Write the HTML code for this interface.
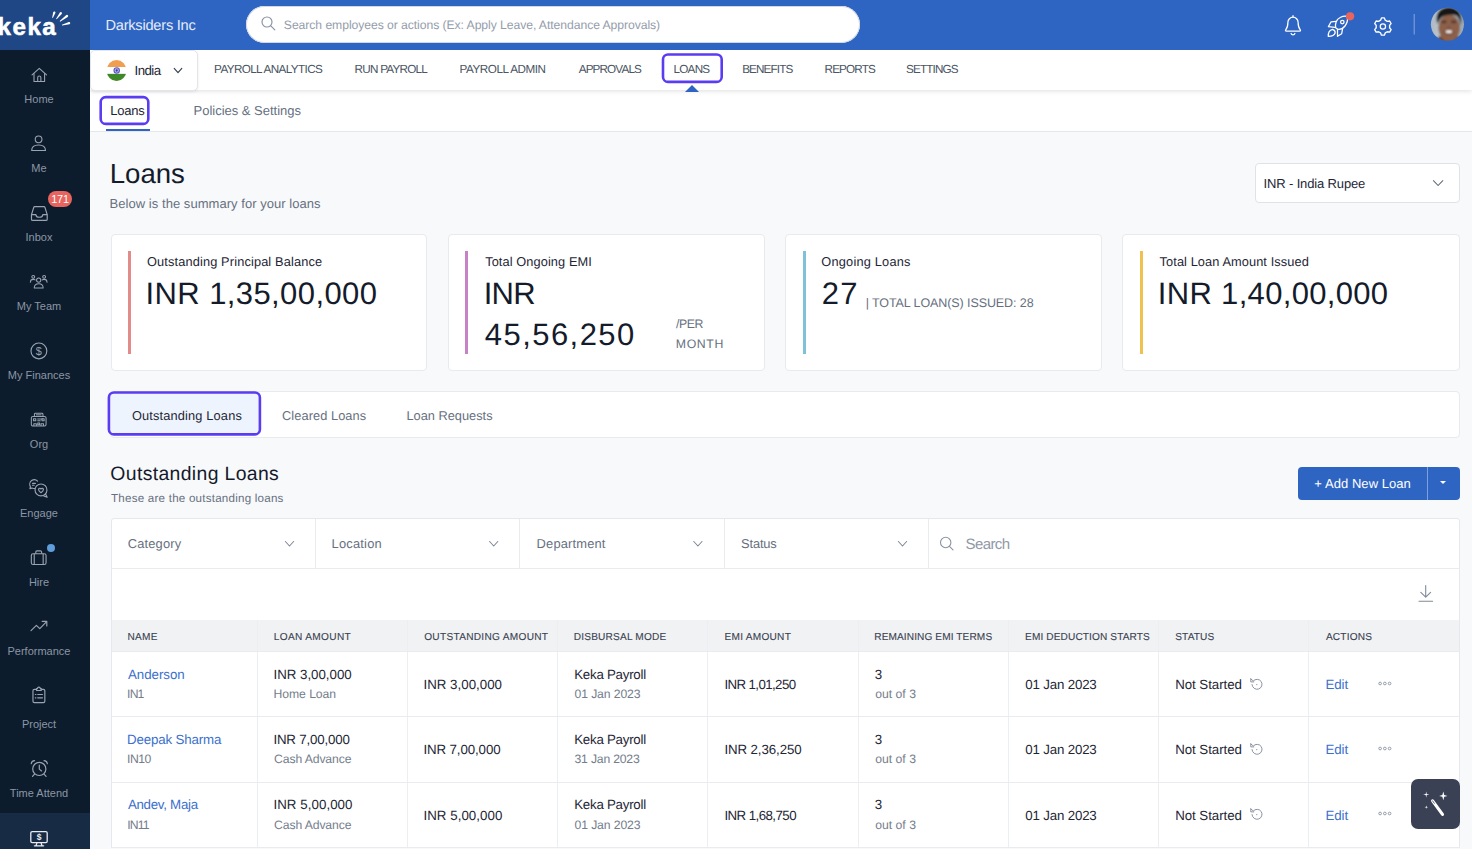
<!DOCTYPE html>
<html lang="en">
<head>
<meta charset="utf-8">
<title>Keka - Loans</title>
<style>
*{box-sizing:border-box;margin:0;padding:0}
html,body{width:1472px;height:861px;overflow:hidden;background:#fff;font-family:"Liberation Sans",sans-serif;color:#1e2635}
#app{position:absolute;left:0;top:0;width:1472px;height:849px;background:#f8f9fb;overflow:hidden}
.abs{position:absolute;white-space:nowrap;line-height:1}
.b{position:absolute}
#txl{position:absolute;left:0;top:0;width:0;height:0;z-index:10}
.tx{position:absolute;white-space:nowrap;line-height:1;text-rendering:geometricPrecision}
#logo{position:absolute;left:0;top:0;width:90px;height:50px;background:#204785;z-index:4}
#topbar{position:absolute;left:90px;top:0;width:1382px;height:50px;background:#2e65c3;z-index:4}
#side{position:absolute;left:0;top:50px;width:90px;height:799px;background:#0d1c2c;z-index:4}
#side .sel{position:absolute;left:0;top:763px;width:90px;height:36px;background:#172b44}
.sl{position:absolute;left:0;width:78px;text-align:center;font-size:11px;color:#8b96a5;line-height:1;white-space:nowrap}
.si{position:absolute}
.si svg{width:100%;height:100%;display:block;overflow:visible}
#nav2{position:absolute;left:90px;top:50px;width:1382px;height:40px;background:#fff;box-shadow:0 1px 5px rgba(0,0,0,.13);z-index:3}
#country{position:absolute;left:0;top:0;width:108px;height:41px;background:#fff;border:1px solid #e2e5ea;border-radius:5px;box-shadow:0 1px 3px rgba(0,0,0,.08)}
#nav3{position:absolute;left:90px;top:90px;width:1382px;height:42px;background:#fff;border-bottom:1px solid #e4e7eb;z-index:2}
.card{position:absolute;top:234px;height:137px;background:#fff;border:1px solid #e8eaee;border-radius:4px}
.bar{position:absolute;top:251px;width:3px;height:102.5px}
.ln{position:absolute;background:#e9ebee}
</style>
</head>
<body>
<div id="app">
<!-- LOGO -->
<div id="logo">
  <div class="abs" style="left:-2.4px;top:15.3px;font-size:24.2px;font-weight:bold;color:#fff;letter-spacing:1.45px;-webkit-text-stroke:.55px #fff">keka</div>
  <svg class="abs" style="left:50px;top:9px" width="22" height="20" viewBox="0 0 22 20" fill="#fff" stroke="none"><path d="M2.83 8.91 L5.39 3.98 A1.15 1.15 0 0 0 3.21 3.22 L2.17 8.69 Z M6.68 10.21 L11.72 4.90 A1.15 1.15 0 0 0 9.88 3.50 L6.12 9.79 Z M10.11 12.68 L17.70 7.92 A1.15 1.15 0 0 0 16.30 6.08 L9.69 12.12 Z M12.10 16.54 L19.52 15.20 A1.15 1.15 0 0 0 18.88 13.00 L11.90 15.86 Z"/></svg>
</div>

<!-- TOP BAR -->
<div id="topbar">
  <div style="position:absolute;left:156px;top:6px;width:614px;height:37px;background:#fff;border-radius:19px;box-shadow:inset 0 0 0 1px #d3d8e0"></div>
  <svg class="abs" style="left:171px;top:16px" width="15" height="15" viewBox="0 0 15 15" fill="none" stroke="#8892a1" stroke-width="1.150" stroke-linecap="round"><circle cx="6" cy="6" r="5"/><path d="M9.800 9.800 L13.800 13.800"/></svg>
<!--TOPICONS-->
</div>
<!-- SIDEBAR -->
<div id="side">
  <div class="sel"></div>
  <!-- Home -->
  <div class="si" style="left:29.7px;top:15.5px;width:18.6px;height:18.6px"><svg viewBox="0 0 20 20" fill="none" stroke="#9aa4b1" stroke-width="1.15" stroke-linejoin="round" stroke-linecap="round"><path d="M2.2 9.6 L10 2.6 L17.8 9.6"/><path d="M4.3 8 V16.6 H15.7 V8"/><path d="M8.3 16.6 V12.4 a1.7 1.7 0 0 1 3.4 0 V16.6"/></svg></div>
  <div class="sl" style="top:44px">Home</div>
  <!-- Me -->
  <div class="si" style="left:29.4px;top:84.3px;width:19.2px;height:19.2px"><svg viewBox="0 0 20 20" fill="none" stroke="#9aa4b1" stroke-width="1.15" stroke-linejoin="round"><circle cx="10" cy="5.6" r="3.5"/><path d="M2.8 17.2 c0-4 3-5.8 7.2-5.8 s7.2 1.8 7.2 5.8 z"/></svg></div>
  <div class="sl" style="top:113px">Me</div>
  <!-- Inbox -->
  <div class="si" style="left:28.6px;top:152.5px;width:20.7px;height:20.7px"><svg viewBox="0 0 20 20" fill="none" stroke="#9aa4b1" stroke-width="1.15" stroke-linejoin="round"><path d="M2.4 11.2 L4.6 4.2 a1 1 0 0 1 1 -.7 H14.4 a1 1 0 0 1 1 .7 L17.6 11.2 V15.6 a1.2 1.2 0 0 1 -1.2 1.2 H3.6 a1.2 1.2 0 0 1 -1.2 -1.2 Z"/><path d="M2.4 11.2 H6.6 c.2 1.6 1.4 2.6 3.4 2.6 s3.2 -1 3.4 -2.6 H17.6"/></svg></div>
  <div class="sl" style="top:182px">Inbox</div>
  <div class="abs" style="left:48px;top:141px;width:24px;height:16px;border-radius:8px;background:#e8645f;color:#fff;font-size:11px;line-height:16px;text-align:center;letter-spacing:-.3px">171</div>
  <!-- My Team -->
  <div class="si" style="left:29.3px;top:221.7px;width:19.4px;height:19.4px"><svg viewBox="0 0 20 20" fill="none" stroke="#9aa4b1" stroke-width="1.05" stroke-linejoin="round" stroke-linecap="round"><circle cx="10" cy="8.3" r="2.2"/><circle cx="4.4" cy="5" r="1.5"/><circle cx="15.6" cy="5" r="1.5"/><path d="M5.4 16.4 c0-3 1.9-4.3 4.6-4.3 s4.6 1.3 4.6 4.3 z"/><path d="M1.4 10.6 c0-2 1.2-3 3-3 c.8 0 1.4 .2 1.9 .6"/><path d="M18.6 10.6 c0-2 -1.2-3 -3-3 c-.8 0 -1.4 .2 -1.9 .6"/></svg></div>
  <div class="sl" style="top:251px">My Team</div>
  <!-- My Finances -->
  <div class="si" style="left:29.1px;top:290.8px;width:19.8px;height:19.8px"><svg viewBox="0 0 20 20" fill="none" stroke="#9aa4b1" stroke-width="1.15"><circle cx="10" cy="10" r="8"/><text x="10" y="14" text-anchor="middle" font-family="Liberation Sans, sans-serif" font-size="11" fill="#9aa4b1" stroke="none">$</text></svg></div>
  <div class="sl" style="top:320px">My Finances</div>
  <!-- Org -->
  <div class="si" style="left:29.3px;top:359.8px;width:19.4px;height:19.4px"><svg viewBox="0 0 20 20" fill="none" stroke="#9aa4b1" stroke-width="1.05" stroke-linejoin="round"><rect x="2.4" y="6.6" width="15.2" height="10" rx="1.6"/><path d="M5.6 6.6 V4.4 a1 1 0 0 1 1 -1 H13.4 a1 1 0 0 1 1 1 V6.6"/><path d="M7.2 5 H12.8"/><rect x="4.6" y="9" width="2.4" height="2.2"/><path d="M8.6 9.4 H14 M8.6 11 H12"/><rect x="13.4" y="9" width="2.2" height="2.2"/><path d="M5 16.6 V14.2 H7.6 V16.6 M12.4 16.6 V14.2 H15 V16.6"/><rect x="9" y="13.4" width="2" height="1.8"/></svg></div>
  <div class="sl" style="top:389px">Org</div>
  <!-- Engage -->
  <div class="si" style="left:28.4px;top:427.8px;width:21.3px;height:21.3px"><svg viewBox="0 0 20 20" fill="none" stroke="#9aa4b1" stroke-width="1.05" stroke-linejoin="round" stroke-linecap="round"><path d="M6.2 9.8 c-.9 .2 -1.8 .1 -2.6 -.3 L1.8 10 l.5 -1.8 C1.2 6.400 1.400 3.800 3.400 2.400 c1.800 -1.200 4.200 -.9 5.600 .6"/><path d="M4.200 5 H7 M4.200 6.800 H5.800"/><circle cx="12.200" cy="11.200" r="5.600"/><path d="M16.400 14.900 L18 18 l-3.200 -1.200"/><path d="M12.200 13.800 c-1.400 -1 -2.300 -1.900 -2.300 -2.900 a1.200 1.200 0 0 1 2.300 -.5 a1.200 1.200 0 0 1 2.300 .5 c0 1 -.9 1.900 -2.300 2.900 z"/></svg></div>
  <div class="sl" style="top:458px">Engage</div>
  <!-- Hire -->
  <div class="si" style="left:29.3px;top:497.6px;width:19.4px;height:19.4px"><svg viewBox="0 0 20 20" fill="none" stroke="#9aa4b1" stroke-width="1.15" stroke-linejoin="round"><rect x="2.400" y="6" width="15.200" height="11" rx="1.800"/><path d="M7 6 V4.200 a1.200 1.200 0 0 1 1.200 -1.200 h3.600 a1.200 1.200 0 0 1 1.200 1.200 V6"/><path d="M5.400 6 V17 M14.600 6 V17"/></svg></div>
  <div class="sl" style="top:527px">Hire</div>
  <div class="abs" style="left:47px;top:494px;width:8px;height:8px;border-radius:4px;background:#5f9ddb"></div>
  <!-- Performance -->
  <div class="si" style="left:29.0px;top:566.2px;width:20px;height:20px"><svg viewBox="0 0 20 20" fill="none" stroke="#9aa4b1" stroke-width="1.15" stroke-linejoin="round" stroke-linecap="round"><path d="M2 14.600 L7.400 9.400 L10.800 12.600 L17.600 5.600"/><path d="M13.200 5.400 H17.800 V10"/></svg></div>
  <div class="sl" style="top:596px">Performance</div>
  <!-- Project -->
  <div class="si" style="left:29.1px;top:635.2px;width:19.8px;height:19.8px"><svg viewBox="0 0 20 20" fill="none" stroke="#9aa4b1" stroke-width="1.15" stroke-linejoin="round" stroke-linecap="round"><path d="M7.600 4.400 H5.400 a1.400 1.400 0 0 0 -1.400 1.400 V16.400 a1.400 1.400 0 0 0 1.400 1.400 H14.600 a1.400 1.400 0 0 0 1.400 -1.400 V5.800 a1.400 1.400 0 0 0 -1.400 -1.400 H12.400"/><path d="M7.600 5.600 V3.600 h1 a1.400 1.400 0 0 1 2.800 0 h1 V5.600 Z"/><path d="M6.400 9.600 h.6 M8.800 9.600 H13.600 M6.400 13 h.6 M8.800 13 H13.600"/></svg></div>
  <div class="sl" style="top:669px">Project</div>
  <!-- Time Attend -->
  <div class="si" style="left:28.7px;top:708.1px;width:20.6px;height:20.6px"><svg viewBox="0 0 20 20" fill="none" stroke="#9aa4b1" stroke-width="1.15" stroke-linejoin="round" stroke-linecap="round"><circle cx="10" cy="10.600" r="6.400"/><path d="M10 7 V10.800 L12.200 12.600"/><path d="M2.200 5.600 c.2 -1.800 1.600 -3 3.200 -3 M17.800 5.600 c-.2 -1.800 -1.600 -3 -3.200 -3"/><path d="M5.400 15.600 L3.400 17.800 M14.600 15.600 L16.600 17.800"/></svg></div>
  <div class="sl" style="top:738px">Time Attend</div>
  <!-- Payroll (selected) -->
  <div class="si" style="left:29.0px;top:777.5px;width:20px;height:20px"><svg viewBox="0 0 20 20" fill="none" stroke="#e8ecf1" stroke-width="1.300" stroke-linejoin="round" stroke-linecap="round"><rect x="1.800" y="3.600" width="16.400" height="11" rx="1.400"/><path d="M8 14.600 L7 17.800 M12 14.600 L13 17.800 M5.400 17.800 H14.600"/><text x="10" y="12.200" text-anchor="middle" font-family="Liberation Sans, sans-serif" font-weight="bold" font-size="8.500" fill="#e8ecf1" stroke="none">$</text></svg></div>
</div>

<!-- TOP ICONS -->
<svg class="b" style="left:1272px;top:0;z-index:6" width="200" height="50" viewBox="1272 0 200 50" fill="none" stroke="#fff" stroke-width="1.25" stroke-linecap="round" stroke-linejoin="round">
  <path d="M1293 15.700 V16.900"/>
  <path d="M1287.900 22.300 A5.100 5.100 0 0 1 1298.100 22.300 C1298.100 26 1298.900 28.300 1300.300 29.900 C1300.800 30.500 1300.400 31.200 1299.700 31.200 H1286.300 C1285.600 31.200 1285.200 30.500 1285.700 29.900 C1287.100 28.300 1287.900 26 1287.900 22.300 Z"/>
  <path d="M1291.100 33.500 A2 2 0 0 0 1294.900 33.500"/>
  <path d="M1347.200 16.400 C1343 15.600 1337.600 17.500 1336.100 22 C1335.400 24 1335.300 26 1335.700 27.800 L1337.600 29.200 C1340 29.600 1343 28.600 1345 26 C1347.500 22.800 1347.800 19 1347.200 16.400 Z"/>
  <path d="M1335.900 21.400 L1331.100 21.800 L1328.400 26.600 L1334.900 27.300"/>
  <path d="M1342.600 28.700 L1341.700 33.700 L1337.500 36.300 L1337.500 29.500"/>
  <path d="M1328.300 36.400 C1328.100 33 1329.600 30.100 1332.600 29.400 C1334.400 30.100 1335.400 31.500 1335.100 33 C1334.500 35.100 1331.800 36.300 1328.300 36.400 Z"/>
  <circle cx="1342.300" cy="22.100" r="1.750"/>
  <path d="M1380.57 20.16 L1381.46 17.92 L1384.34 17.92 L1385.23 20.16 L1387.27 21.34 L1389.65 20.98 L1391.10 23.49 L1389.60 25.37 L1389.60 27.73 L1391.10 29.61 L1389.65 32.12 L1387.27 31.76 L1385.23 32.94 L1384.34 35.18 L1381.46 35.18 L1380.57 32.94 L1378.53 31.76 L1376.15 32.12 L1374.70 29.61 L1376.20 27.73 L1376.20 25.37 L1374.70 23.49 L1376.15 20.98 L1378.53 21.34 Z" stroke-width="1.35"/>
  <circle cx="1382.900" cy="26.550" r="2.650"/>
  <circle cx="1350.100" cy="16.300" r="4.100" fill="#e8655f" stroke="none"/>
  <path d="M1414.200 14 V34.600" stroke="#7f9fdb" stroke-width="1.100" stroke-linecap="butt"/>
  <defs><filter id="bl" x="-10%" y="-10%" width="120%" height="120%"><feGaussianBlur stdDeviation=".8"/></filter><clipPath id="av"><circle cx="1447.400" cy="24.300" r="16.550"/></clipPath>
  <linearGradient id="avbg" x1="0" y1="0" x2="1" y2="0"><stop offset="0" stop-color="#a3afb9"/><stop offset=".3" stop-color="#bcc6cd"/><stop offset="1" stop-color="#98a4ae"/></linearGradient></defs>
  <g clip-path="url(#av)" stroke="none"><g filter="url(#bl)">
    <rect x="1426" y="3" width="43" height="43" fill="url(#avbg)"/>
    <rect x="1441" y="33" width="17" height="11" fill="#85573f"/><ellipse cx="1449.200" cy="27.800" rx="10.800" ry="13.200" fill="#8d614a"/>
    <path d="M1437.200 24 C1434.500 12 1441 7.200 1448.500 7.300 C1457 7.400 1463.500 12.500 1460.800 25.500 C1460.300 21 1459 17.800 1457 15.900 C1452.500 13.800 1446.500 14.600 1442 17 C1440 19 1438.600 21.500 1437.200 24 Z" fill="#121317"/>
    <ellipse cx="1443.900" cy="21.900" rx="2.900" ry="1.300" fill="#47302a" opacity=".85"/><ellipse cx="1453.700" cy="21.900" rx="2.900" ry="1.300" fill="#47302a" opacity=".85"/>
    <ellipse cx="1448.800" cy="27.200" rx="2.200" ry="1.200" fill="#7a4f3d" opacity=".7"/>
    <ellipse cx="1448.900" cy="32.100" rx="5" ry="2.500" fill="#6a4034"/>
    <ellipse cx="1448.900" cy="31.700" rx="3.400" ry="1.350" fill="#f7f3ef"/>
    <path d="M1436 42 L1438.500 36.500 C1440.500 35.500 1442 37 1443 39.500 L1444 43 Z" fill="#6b4435"/>
    <path d="M1462 42 L1459.500 36.800 C1457.800 36 1456.600 37.400 1455.800 39.600 L1455 43 Z" fill="#7a4c3a"/>
  </g></g>
</svg>
<!-- NAV 2 -->
<div id="nav2">
  <div id="country"></div>
  <svg class="b" style="left:14px;top:8px" width="26" height="26" viewBox="104 58 26 26"><defs><clipPath id="fl"><ellipse cx="116.550" cy="70.450" rx="9.850" ry="10.550"/></clipPath></defs><g clip-path="url(#fl)"><rect x="104" y="58" width="26" height="9.050" fill="#ef9f4f"/><rect x="104" y="67.050" width="26" height="6.800" fill="#fff"/><rect x="104" y="73.850" width="26" height="10" fill="#3f8828"/></g><circle cx="116.700" cy="70.500" r="2.700" fill="#b9b9e6" stroke="#5a5ac2" stroke-width="1.100"/><circle cx="116.700" cy="70.500" r="1.150" fill="#3b3bb0"/></svg>
  <div class="b" style="left:595px;top:35px;width:0;height:0;border-left:7px solid transparent;border-right:7px solid transparent;border-bottom:7px solid #2e65c3"></div>
</div>
<svg class="b" style="left:172px;top:66px;z-index:8" width="12" height="9" viewBox="172 66 12 9" fill="none" stroke="#374151" stroke-width="1.15" stroke-linecap="round" stroke-linejoin="round"><path d="M174.20 68.40 L178.00 72.70 L181.80 68.40"/></svg><svg class="b" style="left:659px;top:51px;z-index:9" width="66" height="35" viewBox="659 51 66 35"><rect x="663.00" y="54.50" width="58.70" height="27.40" rx="5" fill="none" stroke="#5a3df2" stroke-width="2.6"/></svg><!-- NAV 3 -->
<div id="nav3">
  <div class="b" style="left:15.5px;top:39px;width:44.5px;height:2px;background:#2e65c3"></div>
</div>
<svg class="b" style="left:97px;top:93px;z-index:9" width="55" height="35" viewBox="97 93 55 35"><rect x="100.70" y="97.10" width="47.60" height="26.80" rx="5" fill="none" stroke="#5a3df2" stroke-width="2.6"/></svg><!-- MAIN -->
<div class="b" style="left:1255px;top:163px;width:205px;height:40px;background:#fff;border:1px solid #dfe3e8;border-radius:4px"></div>
<svg class="b" style="left:1431px;top:178px;z-index:8" width="14" height="10" viewBox="1431 178 14 10" fill="none" stroke="#5c6675" stroke-width="1.05" stroke-linecap="round" stroke-linejoin="round"><path d="M1433.40 180.70 L1438.10 185.50 L1442.80 180.70"/></svg><div class="card" style="left:111px;width:316px"></div><div class="bar" style="left:128.3px;background:#e28b8b"></div>
<div class="card" style="left:448px;width:317px"></div><div class="bar" style="left:465px;background:#c781c6"></div>
<div class="card" style="left:785px;width:317px"></div><div class="bar" style="left:802.5px;background:#7fc1d9"></div>
<div class="card" style="left:1122px;width:338px"></div><div class="bar" style="left:1139.8px;background:#f0c14f"></div>
<div class="b" style="left:110px;top:391px;width:1350px;height:47px;background:#fff;border:1px solid #e8eaee;border-radius:4px"></div>
<svg class="b" style="left:105px;top:389px;z-index:9" width="159" height="49" viewBox="105 389 159 49"><rect x="108.90" y="392.50" width="151.00" height="41.90" rx="5" fill="#eef4fd" stroke="#5a3df2" stroke-width="2.6"/></svg><div class="b" style="left:1298px;top:467px;width:129px;height:33px;background:#2e65c3;border-radius:4px 0 0 4px"></div><div class="b" style="left:1427px;top:467px;width:1px;height:33px;background:#7ea0dc"></div><div class="b" style="left:1428px;top:467px;width:32px;height:33px;background:#2e65c3;border-radius:0 4px 4px 0"></div><div class="b" style="left:1440.300px;top:481px;width:0;height:0;border-left:3.4px solid transparent;border-right:3.4px solid transparent;border-top:3.8px solid #fff"></div>
<div class="b" style="left:111px;top:518px;width:1349px;height:330px;background:#fff;border:1px solid #e6e8ec;border-radius:3px 3px 0 0"></div>
<div class="ln" style="left:111px;top:568px;width:1349px;height:1px"></div>
<div class="ln" style="left:315px;top:519px;width:1px;height:49px"></div><div class="ln" style="left:519px;top:519px;width:1px;height:49px"></div><div class="ln" style="left:724px;top:519px;width:1px;height:49px"></div><div class="ln" style="left:928px;top:519px;width:1px;height:49px"></div>
<svg class="b" style="left:283px;top:539px;z-index:8" width="13" height="9" viewBox="283 539 13 9" fill="none" stroke="#7c8694" stroke-width="1.05" stroke-linecap="round" stroke-linejoin="round"><path d="M285.40 541.50 L289.50 546.00 L293.60 541.50"/></svg><svg class="b" style="left:487px;top:539px;z-index:8" width="13" height="9" viewBox="487 539 13 9" fill="none" stroke="#7c8694" stroke-width="1.05" stroke-linecap="round" stroke-linejoin="round"><path d="M489.60 541.50 L493.70 546.00 L497.80 541.50"/></svg><svg class="b" style="left:691px;top:539px;z-index:8" width="13" height="9" viewBox="691 539 13 9" fill="none" stroke="#7c8694" stroke-width="1.05" stroke-linecap="round" stroke-linejoin="round"><path d="M693.80 541.50 L697.90 546.00 L702.00 541.50"/></svg><svg class="b" style="left:896px;top:539px;z-index:8" width="13" height="9" viewBox="896 539 13 9" fill="none" stroke="#7c8694" stroke-width="1.05" stroke-linecap="round" stroke-linejoin="round"><path d="M898.40 541.50 L902.50 546.00 L906.60 541.50"/></svg>
<svg class="b" style="left:939px;top:536px" width="16" height="16" viewBox="0 0 16 16" fill="none" stroke="#8a93a2" stroke-width="1.100" stroke-linecap="round"><circle cx="6.700" cy="6.500" r="5.200"/><path d="M10.500 10.400 L14 13.800"/></svg>
<svg class="b" style="left:1417px;top:584px" width="18" height="19" viewBox="0 0 18 19" fill="none" stroke="#808a98" stroke-width="1.100" stroke-linecap="round" stroke-linejoin="round"><path d="M8.700 1.500 V13 M3.800 8.300 L8.700 13.200 L13.600 8.300 M2 17.300 H15.600"/></svg>
<div class="b" style="left:112px;top:620px;width:1347px;height:31px;background:#f1f2f4"></div>
<div class="ln" style="left:257px;top:620px;width:1px;height:228px;background:#eceef1"></div><div class="ln" style="left:407px;top:620px;width:1px;height:228px;background:#eceef1"></div><div class="ln" style="left:557px;top:620px;width:1px;height:228px;background:#eceef1"></div><div class="ln" style="left:707px;top:620px;width:1px;height:228px;background:#eceef1"></div><div class="ln" style="left:858px;top:620px;width:1px;height:228px;background:#eceef1"></div><div class="ln" style="left:1008px;top:620px;width:1px;height:228px;background:#eceef1"></div><div class="ln" style="left:1158px;top:620px;width:1px;height:228px;background:#eceef1"></div><div class="ln" style="left:1308px;top:620px;width:1px;height:228px;background:#eceef1"></div>
<div class="ln" style="left:111px;top:651px;width:1349px;height:1px;background:#e9ebee"></div><div class="ln" style="left:111px;top:716px;width:1349px;height:1px;background:#e9ebee"></div><div class="ln" style="left:111px;top:782px;width:1349px;height:1px;background:#e9ebee"></div><div class="ln" style="left:111px;top:847px;width:1349px;height:1px;background:#e9ebee"></div>
<svg class="b" style="left:1249.500px;top:677.5px" width="13" height="13" viewBox="0 0 13 13" fill="none" stroke="#7d8796" stroke-width=".9" stroke-linecap="round" stroke-linejoin="round"><path d="M3.300 2.900 A5 5 0 1 1 2 6.600"/><path d="M.8 .9 V3.900 H3.800 M.8 .9 L2.600 2.400"/><circle cx="6.800" cy="6.600" r=".6" fill="#7d8796" stroke="none"/></svg><svg class="b" style="left:1377.500px;top:680.5px" width="15" height="5" viewBox="0 0 15 5" fill="none" stroke="#7c8695" stroke-width=".8"><circle cx="2.100" cy="2.500" r="1.350"/><circle cx="6.850" cy="2.500" r="1.350"/><circle cx="11.600" cy="2.500" r="1.350"/></svg><svg class="b" style="left:1249.500px;top:742.8px" width="13" height="13" viewBox="0 0 13 13" fill="none" stroke="#7d8796" stroke-width=".9" stroke-linecap="round" stroke-linejoin="round"><path d="M3.300 2.900 A5 5 0 1 1 2 6.600"/><path d="M.8 .9 V3.900 H3.800 M.8 .9 L2.600 2.400"/><circle cx="6.800" cy="6.600" r=".6" fill="#7d8796" stroke="none"/></svg><svg class="b" style="left:1377.500px;top:745.8px" width="15" height="5" viewBox="0 0 15 5" fill="none" stroke="#7c8695" stroke-width=".8"><circle cx="2.100" cy="2.500" r="1.350"/><circle cx="6.850" cy="2.500" r="1.350"/><circle cx="11.600" cy="2.500" r="1.350"/></svg><svg class="b" style="left:1249.500px;top:808.0px" width="13" height="13" viewBox="0 0 13 13" fill="none" stroke="#7d8796" stroke-width=".9" stroke-linecap="round" stroke-linejoin="round"><path d="M3.300 2.900 A5 5 0 1 1 2 6.600"/><path d="M.8 .9 V3.900 H3.800 M.8 .9 L2.600 2.400"/><circle cx="6.800" cy="6.600" r=".6" fill="#7d8796" stroke="none"/></svg><svg class="b" style="left:1377.500px;top:811.0px" width="15" height="5" viewBox="0 0 15 5" fill="none" stroke="#7c8695" stroke-width=".8"><circle cx="2.100" cy="2.500" r="1.350"/><circle cx="6.850" cy="2.500" r="1.350"/><circle cx="11.600" cy="2.500" r="1.350"/></svg>
<div class="b" style="left:1411px;top:779px;width:49px;height:50px;border-radius:7px;background:#3b4155;z-index:12">
  <svg style="position:absolute;left:0;top:0" width="49" height="50" viewBox="1411 779 49 50" fill="#fff" stroke="none"><path d="M1432.600 800.800 L1442.500 814.400" stroke="#fff" stroke-width="3.1" stroke-linecap="round" fill="none"/><path d="M1432.500 800.800 L1434.300 803.300" stroke="#3b4155" stroke-width=".8" stroke-linecap="round" fill="none"/><path d="M1443.300 791.500 l.95 3.450 l3.200 .95 l-3.200 .95 l-.95 3.450 l-.95 -3.450 l-3.200 -.95 l3.200 -.95 z"/><path d="M1426.200 791.400 l.5 2.700 l2.700 .5 l-2.700 .5 l-.5 2.700 l-.5 -2.700 l-2.700 -.5 l2.700 -.5 z"/><path d="M1426.300 805.400 l.35 1.450 l1.450 .35 l-1.450 .35 l-.35 1.450 l-.35 -1.450 l-1.450 -.35 l1.450 -.35 z"/></svg>
</div>

<!--TXS-->
<div id="txl">
<div class="tx" id="org" style="left:105.44px;top:19.04px;font-size:14.6px;color:#e6ecf8;letter-spacing:-0.222px">Darksiders Inc</div>
<div class="tx" id="srch" style="left:283.85px;top:18.87px;font-size:12.2px;color:#949dab;letter-spacing:-0.067px">Search employees or actions (Ex: Apply Leave, Attendance Approvals)</div>
<div class="tx" id="india" style="left:134.53px;top:63.74px;font-size:13.3px;color:#1e2635;letter-spacing:-0.569px">India</div>
<div class="tx" id="n1" style="left:214.08px;top:64.10px;font-size:11.7px;color:#4b5563;letter-spacing:-0.609px">PAYROLL ANALYTICS</div>
<div class="tx" id="n2" style="left:354.59px;top:64.10px;font-size:11.7px;color:#4b5563;letter-spacing:-0.754px">RUN PAYROLL</div>
<div class="tx" id="n3" style="left:459.55px;top:64.10px;font-size:11.7px;color:#4b5563;letter-spacing:-0.468px">PAYROLL ADMIN</div>
<div class="tx" id="n4" style="left:578.69px;top:64.10px;font-size:11.7px;color:#4b5563;letter-spacing:-0.850px">APPROVALS</div>
<div class="tx" id="n5" style="left:673.44px;top:64.10px;font-size:11.7px;color:#4b5563;letter-spacing:-0.732px">LOANS</div>
<div class="tx" id="n6" style="left:742.13px;top:64.10px;font-size:11.7px;color:#4b5563;letter-spacing:-0.850px">BENEFITS</div>
<div class="tx" id="n7" style="left:824.58px;top:64.10px;font-size:11.7px;color:#4b5563;letter-spacing:-0.850px">REPORTS</div>
<div class="tx" id="n8" style="left:906.09px;top:64.10px;font-size:11.7px;color:#4b5563;letter-spacing:-0.850px">SETTINGS</div>
<div class="tx" id="t3a" style="left:110.20px;top:104.30px;font-size:13px;color:#1e2635;letter-spacing:-0.207px">Loans</div>
<div class="tx" id="t3b" style="left:193.59px;top:104.30px;font-size:13px;color:#667080;letter-spacing:-0.015px">Policies &amp; Settings</div>
<div class="tx" id="h1" style="left:109.74px;top:159.64px;font-size:27.6px;color:#141b2b;letter-spacing:-0.017px">Loans</div>
<div class="tx" id="sub1" style="left:109.59px;top:197.10px;font-size:13px;color:#667080;letter-spacing:0.043px">Below is the summary for your loans</div>
<div class="tx" id="cur" style="left:1263.54px;top:176.70px;font-size:13px;color:#1e2635;letter-spacing:-0.140px">INR - India Rupee</div>
<div class="tx" id="c1l" style="left:147.02px;top:255.66px;font-size:12.8px;color:#1e2635;letter-spacing:0.128px">Outstanding Principal Balance</div>
<div class="tx" id="c1v" style="left:145.55px;top:278.16px;font-size:31px;color:#141b2b;letter-spacing:0.403px">INR 1,35,00,000</div>
<div class="tx" id="c2l" style="left:485.18px;top:255.66px;font-size:12.8px;color:#1e2635;letter-spacing:0.085px">Total Ongoing EMI</div>
<div class="tx" id="c2v" style="left:483.69px;top:278.16px;font-size:31px;color:#141b2b;letter-spacing:-0.703px">INR</div>
<div class="tx" id="c2w" style="left:484.82px;top:318.76px;font-size:31px;color:#141b2b;letter-spacing:1.438px">45,56,250</div>
<div class="tx" id="c2p" style="left:676.07px;top:317.59px;font-size:12.3px;color:#667080;letter-spacing:-0.485px">/PER</div>
<div class="tx" id="c2m" style="left:675.81px;top:337.59px;font-size:12.3px;color:#667080;letter-spacing:0.628px">MONTH</div>
<div class="tx" id="c3l" style="left:821.30px;top:255.66px;font-size:12.8px;color:#1e2635;letter-spacing:0.197px">Ongoing Loans</div>
<div class="tx" id="c3v" style="left:821.64px;top:278.16px;font-size:31px;color:#141b2b;letter-spacing:1.380px">27</div>
<div class="tx" id="c3t" style="left:865.67px;top:297.42px;font-size:12.5px;color:#667080;letter-spacing:-0.091px">| TOTAL LOAN(S) ISSUED: 28</div>
<div class="tx" id="c4l" style="left:1159.55px;top:255.66px;font-size:12.8px;color:#1e2635;letter-spacing:0.086px">Total Loan Amount Issued</div>
<div class="tx" id="c4v" style="left:1157.78px;top:278.16px;font-size:31px;color:#141b2b;letter-spacing:0.326px">INR 1,40,00,000</div>
<div class="tx" id="tb1" style="left:131.90px;top:409.96px;font-size:12.8px;color:#1e2635;letter-spacing:0.155px">Outstanding Loans</div>
<div class="tx" id="tb2" style="left:282.06px;top:409.96px;font-size:12.8px;color:#667080;letter-spacing:0.068px">Cleared Loans</div>
<div class="tx" id="tb3" style="left:406.49px;top:409.96px;font-size:12.8px;color:#667080;letter-spacing:-0.000px">Loan Requests</div>
<div class="tx" id="h2" style="left:110.35px;top:465.18px;font-size:19.4px;color:#141b2b;letter-spacing:0.350px">Outstanding Loans</div>
<div class="tx" id="sub2" style="left:111.02px;top:493.18px;font-size:11.6px;color:#667080;letter-spacing:0.225px">These are the outstanding loans</div>
<div class="tx" id="addbtn" style="left:1314.34px;top:477.00px;font-size:13px;color:#fff;letter-spacing:0.058px">+ Add New Loan</div>
<div class="tx" id="f1" style="left:127.65px;top:538.28px;font-size:12.9px;color:#667080;letter-spacing:0.184px">Category</div>
<div class="tx" id="f2" style="left:331.59px;top:538.28px;font-size:12.9px;color:#667080;letter-spacing:0.201px">Location</div>
<div class="tx" id="f3" style="left:536.59px;top:538.28px;font-size:12.9px;color:#667080;letter-spacing:0.169px">Department</div>
<div class="tx" id="f4" style="left:741.12px;top:538.28px;font-size:12.9px;color:#667080;letter-spacing:-0.169px">Status</div>
<div class="tx" id="f5" style="left:965.58px;top:536.50px;font-size:15px;color:#8f98a6;letter-spacing:-0.607px">Search</div>
<div class="tx" id="th0" style="left:127.60px;top:632.65px;font-size:10.1px;color:#3a4351;letter-spacing:0.238px;-webkit-text-stroke:.12px #3a4351">NAME</div>
<div class="tx" id="th1" style="left:273.81px;top:632.65px;font-size:10.1px;color:#3a4351;letter-spacing:0.349px;-webkit-text-stroke:.12px #3a4351">LOAN AMOUNT</div>
<div class="tx" id="th2" style="left:424.20px;top:632.65px;font-size:10.1px;color:#3a4351;letter-spacing:0.302px;-webkit-text-stroke:.12px #3a4351">OUTSTANDING AMOUNT</div>
<div class="tx" id="th3" style="left:573.79px;top:632.65px;font-size:10.1px;color:#3a4351;letter-spacing:0.188px;-webkit-text-stroke:.12px #3a4351">DISBURSAL MODE</div>
<div class="tx" id="th4" style="left:724.52px;top:632.65px;font-size:10.1px;color:#3a4351;letter-spacing:0.264px;-webkit-text-stroke:.12px #3a4351">EMI AMOUNT</div>
<div class="tx" id="th5" style="left:874.29px;top:632.65px;font-size:10.1px;color:#3a4351;letter-spacing:0.107px;-webkit-text-stroke:.12px #3a4351">REMAINING EMI TERMS</div>
<div class="tx" id="th6" style="left:1025.10px;top:632.65px;font-size:10.1px;color:#3a4351;letter-spacing:0.119px;-webkit-text-stroke:.12px #3a4351">EMI DEDUCTION STARTS</div>
<div class="tx" id="th7" style="left:1175.29px;top:632.65px;font-size:10.1px;color:#3a4351;letter-spacing:0.108px;-webkit-text-stroke:.12px #3a4351">STATUS</div>
<div class="tx" id="th8" style="left:1325.97px;top:632.65px;font-size:10.1px;color:#3a4351;letter-spacing:0.172px;-webkit-text-stroke:.12px #3a4351">ACTIONS</div>
<div class="tx" id="r0a" style="left:127.92px;top:667.54px;font-size:13.3px;color:#3b70cc;letter-spacing:-0.011px">Anderson</div>
<div class="tx" id="r0b" style="left:127.12px;top:687.97px;font-size:12.2px;color:#747d8b;letter-spacing:-0.850px">IN1</div>
<div class="tx" id="r0c" style="left:273.46px;top:667.54px;font-size:13.3px;color:#1e2635;letter-spacing:-0.012px">INR 3,00,000</div>
<div class="tx" id="r0d" style="left:273.57px;top:687.97px;font-size:12.2px;color:#747d8b;letter-spacing:-0.063px">Home Loan</div>
<div class="tx" id="r0e" style="left:423.45px;top:678.04px;font-size:13.3px;color:#1e2635;letter-spacing:0.016px">INR 3,00,000</div>
<div class="tx" id="r0f" style="left:574.20px;top:667.54px;font-size:13.3px;color:#1e2635;letter-spacing:-0.241px">Keka Payroll</div>
<div class="tx" id="r0g" style="left:574.56px;top:687.97px;font-size:12.2px;color:#747d8b;letter-spacing:-0.115px">01 Jan 2023</div>
<div class="tx" id="r0h" style="left:724.42px;top:678.04px;font-size:13.3px;color:#1e2635;letter-spacing:-0.608px">INR 1,01,250</div>
<div class="tx" id="r0i" style="left:874.78px;top:667.54px;font-size:13.3px;color:#1e2635;letter-spacing:0.000px">3</div>
<div class="tx" id="r0j" style="left:875.19px;top:687.97px;font-size:12.2px;color:#747d8b;letter-spacing:0.016px">out of 3</div>
<div class="tx" id="r0k" style="left:1025.24px;top:678.04px;font-size:13.3px;color:#1e2635;letter-spacing:-0.168px">01 Jan 2023</div>
<div class="tx" id="r0l" style="left:1175.24px;top:678.04px;font-size:13.3px;color:#1e2635;letter-spacing:-0.064px">Not Started</div>
<div class="tx" id="r0m" style="left:1325.39px;top:678.04px;font-size:13.3px;color:#3b70cc;letter-spacing:-0.072px">Edit</div>
<div class="tx" id="r1a" style="left:127.12px;top:732.79px;font-size:13.3px;color:#3b70cc;letter-spacing:-0.160px">Deepak Sharma</div>
<div class="tx" id="r1b" style="left:127.10px;top:753.22px;font-size:12.2px;color:#747d8b;letter-spacing:-0.506px">IN10</div>
<div class="tx" id="r1c" style="left:273.42px;top:732.79px;font-size:13.3px;color:#1e2635;letter-spacing:-0.177px">INR 7,00,000</div>
<div class="tx" id="r1d" style="left:274.06px;top:753.22px;font-size:12.2px;color:#747d8b;letter-spacing:-0.105px">Cash Advance</div>
<div class="tx" id="r1e" style="left:423.45px;top:743.29px;font-size:13.3px;color:#1e2635;letter-spacing:-0.111px">INR 7,00,000</div>
<div class="tx" id="r1f" style="left:574.20px;top:732.79px;font-size:13.3px;color:#1e2635;letter-spacing:-0.241px">Keka Payroll</div>
<div class="tx" id="r1g" style="left:574.54px;top:753.22px;font-size:12.2px;color:#747d8b;letter-spacing:-0.193px">31 Jan 2023</div>
<div class="tx" id="r1h" style="left:724.42px;top:743.29px;font-size:13.3px;color:#1e2635;letter-spacing:-0.105px">INR 2,36,250</div>
<div class="tx" id="r1i" style="left:874.78px;top:732.79px;font-size:13.3px;color:#1e2635;letter-spacing:0.000px">3</div>
<div class="tx" id="r1j" style="left:875.19px;top:753.22px;font-size:12.2px;color:#747d8b;letter-spacing:0.016px">out of 3</div>
<div class="tx" id="r1k" style="left:1025.24px;top:743.29px;font-size:13.3px;color:#1e2635;letter-spacing:-0.168px">01 Jan 2023</div>
<div class="tx" id="r1l" style="left:1175.24px;top:743.29px;font-size:13.3px;color:#1e2635;letter-spacing:-0.064px">Not Started</div>
<div class="tx" id="r1m" style="left:1325.39px;top:743.29px;font-size:13.3px;color:#3b70cc;letter-spacing:-0.072px">Edit</div>
<div class="tx" id="r2a" style="left:127.89px;top:798.04px;font-size:13.3px;color:#3b70cc;letter-spacing:-0.265px">Andev, Maja</div>
<div class="tx" id="r2b" style="left:127.17px;top:819.27px;font-size:12.2px;color:#747d8b;letter-spacing:-0.850px">IN11</div>
<div class="tx" id="r2c" style="left:273.45px;top:798.04px;font-size:13.3px;color:#1e2635;letter-spacing:0.062px">INR 5,00,000</div>
<div class="tx" id="r2d" style="left:274.06px;top:819.27px;font-size:12.2px;color:#747d8b;letter-spacing:-0.105px">Cash Advance</div>
<div class="tx" id="r2e" style="left:423.46px;top:808.54px;font-size:13.3px;color:#1e2635;letter-spacing:0.043px">INR 5,00,000</div>
<div class="tx" id="r2f" style="left:574.20px;top:798.04px;font-size:13.3px;color:#1e2635;letter-spacing:-0.241px">Keka Payroll</div>
<div class="tx" id="r2g" style="left:574.56px;top:819.27px;font-size:12.2px;color:#747d8b;letter-spacing:-0.115px">01 Jan 2023</div>
<div class="tx" id="r2h" style="left:724.41px;top:808.54px;font-size:13.3px;color:#1e2635;letter-spacing:-0.566px">INR 1,68,750</div>
<div class="tx" id="r2i" style="left:874.78px;top:798.04px;font-size:13.3px;color:#1e2635;letter-spacing:0.000px">3</div>
<div class="tx" id="r2j" style="left:875.19px;top:819.27px;font-size:12.2px;color:#747d8b;letter-spacing:0.016px">out of 3</div>
<div class="tx" id="r2k" style="left:1025.24px;top:808.54px;font-size:13.3px;color:#1e2635;letter-spacing:-0.168px">01 Jan 2023</div>
<div class="tx" id="r2l" style="left:1175.24px;top:808.54px;font-size:13.3px;color:#1e2635;letter-spacing:-0.064px">Not Started</div>
<div class="tx" id="r2m" style="left:1325.39px;top:808.54px;font-size:13.3px;color:#3b70cc;letter-spacing:-0.072px">Edit</div>
</div>
<!--TXE-->
</div>
</body>
</html>
